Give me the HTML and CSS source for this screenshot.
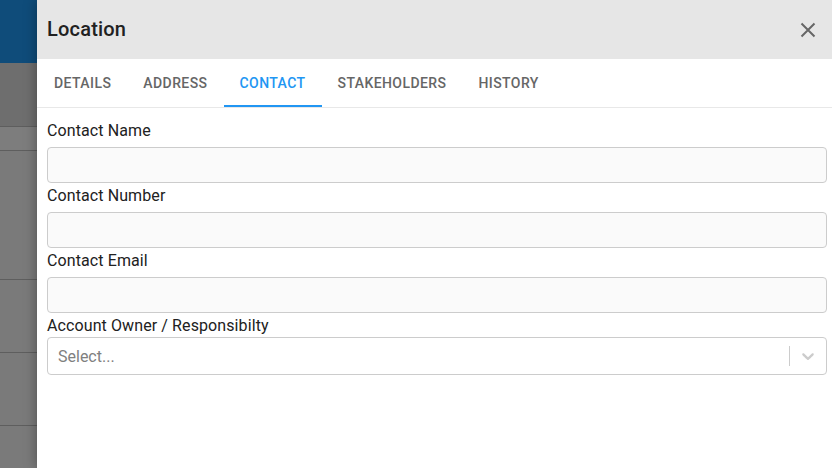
FILE: index.html
```html
<!DOCTYPE html>
<html>
<head>
<meta charset="utf-8">
<link rel="stylesheet" href="styles.css">
</head>
<body>
<div class="app">
  <div class="appbar"></div>
  <div class="toolbar"></div>
  <div class="row row-head"></div>
  <div class="row r1"></div>
  <div class="row r2"></div>
  <div class="row r3"></div>
  <div class="row r4"></div>
</div>
<div class="backdrop"></div>
<aside class="drawer">
  <header class="drawer-header">
    <h1 class="title">Location</h1>
    <button class="close" aria-label="Close">
      <svg width="16" height="16" viewBox="0 0 16 16"><path d="M1.5 1.5 L14.5 14.5 M14.5 1.5 L1.5 14.5" stroke="#666" stroke-width="2" fill="none"/></svg>
    </button>
  </header>
  <nav class="tabs">
    <div class="tab">DETAILS</div>
    <div class="tab">ADDRESS</div>
    <div class="tab active">CONTACT</div>
    <div class="tab">STAKEHOLDERS</div>
    <div class="tab">HISTORY</div>
  </nav>
  <form class="form">
    <label class="label">Contact Name</label>
    <div class="input"></div>
    <label class="label">Contact Number</label>
    <div class="input"></div>
    <label class="label">Contact Email</label>
    <div class="input"></div>
    <label class="label label-select">Account Owner / Responsibilty</label>
    <div class="select">
      <span class="placeholder">Select...</span>
      <span class="indicators">
        <span class="sep"></span>
        <svg class="chev" width="20" height="20" viewBox="0 0 20 20"><path d="M4.516 7.548c0.436-0.446 1.043-0.481 1.576 0l3.908 3.747 3.908-3.747c0.533-0.481 1.141-0.446 1.574 0 0.436 0.445 0.408 1.197 0 1.615-0.406 0.418-4.695 4.502-4.695 4.502-0.217 0.223-0.502 0.335-0.787 0.335s-0.57-0.112-0.789-0.335c0 0-4.287-4.084-4.695-4.502s-0.436-1.170 0-1.615z" fill="#ccc"/></svg>
      </span>
    </div>
  </form>
</aside>
</body>
</html>
```

FILE: styles.css
```css
* { box-sizing: border-box; }
html, body { margin: 0; padding: 0; }
body {
  width: 832px;
  height: 468px;
  overflow: hidden;
  font-family: Roboto, "Liberation Sans", Arial, sans-serif;
  background: #f4f4f4;
  position: relative;
}
.app { display: flex; flex-direction: column; width: 100%; height: 100%; }
.appbar { height: 63px; background: #1e98f5; flex: none; }
.toolbar { height: 64px; background: #dcdcdc; border-bottom: 1px solid #bdbdbd; flex: none; }
.row { border-bottom: 1px solid #bdbdbd; background: #f5f5f5; flex: none; }
.row-head { height: 24px; background: #fafafa; }
.r1 { height: 129px; }
.r2 { height: 73px; }
.r3 { height: 73px; }
.r4 { height: 60px; }
.backdrop {
  position: absolute; inset: 0;
  background: rgba(0, 0, 0, 0.5);
}
.drawer {
  position: absolute;
  top: 0; bottom: 0; left: 37px; right: 0;
  background: #fff;
  box-shadow: 0 0 12px rgba(0,0,0,0.35);
  display: flex; flex-direction: column;
}
.drawer-header {
  height: 59px;
  background: #e6e6e6;
  display: flex; align-items: center; justify-content: space-between;
  padding: 0 16px 0 10px;
}
.title {
  margin: 0 0 1px 0;
  font-size: 20px;
  font-weight: 500;
  color: #212121;
  letter-spacing: 0.2px;
}
.close {
  border: 0; background: none; padding: 0; margin: 0;
  width: 16px; height: 16px; display: flex;
}
.tabs {
  display: flex;
  height: 49px;
  border-bottom: 1px solid #e8e8e8;
  padding-left: 1px;
}
.tab {
  padding: 2px 16px 0;
  display: flex; align-items: center;
  font-size: 14px; font-weight: 500;
  letter-spacing: 0.42px;
  color: #666;
  border-bottom: 2px solid transparent;
}
.tab.active { color: #2196f3; border-bottom-color: #2196f3; }
.form {
  display: flex; flex-direction: column;
  padding: 10px 5px 0 10px;
}
.label {
  font-size: 16px; line-height: 24px; color: #212121;
  margin-bottom: 5px;
  padding-top: 1px;
  height: 24px;
  letter-spacing: 0.1px;
}
.label-select { margin-bottom: 0; }
.input {
  height: 36px;
  border: 1px solid #ccc;
  border-radius: 4px;
  background: #fafafa;
}
.select {
  height: 38px;
  border: 1px solid #ccc;
  border-radius: 4px;
  background: #fff;
  display: flex; align-items: center; justify-content: space-between;
  padding-left: 10px;
}
.placeholder { color: #808080; font-size: 16px; }
.indicators { display: flex; align-items: center; height: 100%; }
.sep { width: 1px; height: 20px; background: #ccc; }
.chev { margin: 0 8px; }
```
